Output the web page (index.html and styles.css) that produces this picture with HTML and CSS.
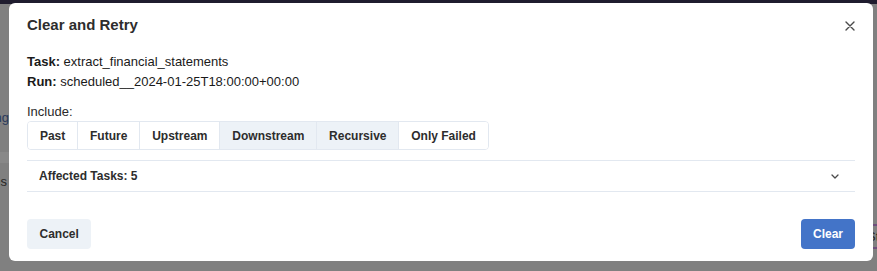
FILE: index.html
```html
<!DOCTYPE html>
<html>
<head>
<meta charset="utf-8">
<link rel="stylesheet" href="styles.css">
</head>
<body>
<div class="page">
  <div class="topbar"></div>
  <div class="bg">
    <div class="bg-left">
      <div class="bg-text bg-ng">Running</div>
      <div class="bg-stripe"></div>
      <div class="bg-text bg-s">Runs</div>
    </div>
    <div class="bg-right">
      <div class="bg-tag">Start</div>
    </div>
  </div>

  <div class="modal">
    <div class="modal-header">
      <h2 class="title">Clear and Retry</h2>
      <button class="close" aria-label="Close">
        <svg width="10" height="10" viewBox="0 0 10 10"><path d="M1 1L9 9M9 1L1 9" stroke="#4a4a4a" stroke-width="1.4" stroke-linecap="round"/></svg>
      </button>
    </div>
    <div class="modal-body">
      <div class="info"><b>Task:</b> extract_financial_statements</div>
      <div class="info"><b>Run:</b> scheduled__2024-01-25T18:00:00+00:00</div>
      <div class="include-label">Include:</div>
      <div class="group">
        <button class="opt">Past</button>
        <button class="opt">Future</button>
        <button class="opt">Upstream</button>
        <button class="opt active">Downstream</button>
        <button class="opt active">Recursive</button>
        <button class="opt">Only Failed</button>
      </div>
      <div class="accordion">
        <span class="acc-title">Affected Tasks: 5</span>
        <svg class="chev" width="8" height="5" viewBox="0 0 8 5"><path d="M1 1L4 4L7 1" fill="none" stroke="#4a4a4a" stroke-width="1.3" stroke-linecap="round" stroke-linejoin="round"/></svg>
      </div>
    </div>
    <div class="modal-footer">
      <button class="btn btn-cancel">Cancel</button>
      <button class="btn btn-clear">Clear</button>
    </div>
  </div>
</div>
</body>
</html>
```

FILE: styles.css
```css
* { box-sizing: border-box; }
html, body { margin: 0; padding: 0; }
body {
  width: 877px;
  height: 271px;
  overflow: hidden;
  font-family: "Liberation Sans", Arial, Helvetica, sans-serif;
  background: #808080;
}
.page {
  position: relative;
  width: 877px;
  height: 271px;
  background: #808080;
}
.topbar {
  height: 4px;
  background: #1f1c2e;
}
.bg {
  display: flex;
  justify-content: space-between;
  height: 267px;
}
.bg-left {
  width: 9px;
  overflow: hidden;
  display: flex;
  flex-direction: column;
  align-items: flex-end;
}
.bg-text {
  font-size: 13px;
  line-height: 16px;
  white-space: nowrap;
}
.bg-ng {
  margin-top: 106px;
  color: #2a3a5c;
}
.bg-stripe {
  width: 9px;
  height: 11px;
  margin-top: 26px;
  background: #888888;
}
.bg-s {
  margin-top: 11px;
  margin-right: 2px;
  color: #262626;
}
.bg-right {
  width: 5px;
  overflow: hidden;
  display: flex;
  flex-direction: column;
}
.bg-tag {
  margin-top: 220px;
  height: 25px;
  border-top: 2px solid #6e4f7c;
  border-bottom: 2px solid #6e4f7c;
  font-size: 13px;
  line-height: 21px;
  color: #262626;
  white-space: nowrap;
  text-indent: -5px;
}

.modal {
  position: absolute;
  left: 9px;
  top: 3px;
  width: 864px;
  height: 258px;
  background: #ffffff;
  border-radius: 6px;
  color: #1a202c;
  display: flex;
  flex-direction: column;
}
.modal-header {
  display: flex;
  justify-content: space-between;
  align-items: flex-start;
  padding: 12px 16px 0 18px;
}
.title {
  margin: 0;
  font-size: 15px;
  line-height: 20px;
  font-weight: 700;
  color: #2d2d2d;
}
.close {
  width: 14px;
  height: 14px;
  padding: 0;
  margin-top: 4px;
  border: 0;
  background: transparent;
  display: flex;
  align-items: center;
  justify-content: center;
}
.modal-body {
  padding: 17px 18px 0 18px;
}
.info {
  font-size: 13px;
  line-height: 20px;
  color: #1a1a1a;
}
.info b { font-weight: 700; }
.include-label {
  margin-top: 11px;
  font-size: 13px;
  line-height: 18px;
  color: #2a2a2a;
}
.group {
  display: inline-flex;
  height: 29px;
  border: 1px solid #e2e8f0;
  border-radius: 4px;
  overflow: hidden;
}
.opt {
  font-family: inherit;
  font-size: 12px;
  font-weight: 700;
  color: #2d2d2d;
  background: #ffffff;
  border: 0;
  border-left: 1px solid #e2e8f0;
  padding: 0 11.9px;
  margin: 0;
  height: 27px;
}
.opt:first-child { border-left: 0; }
.opt.active { background: #edf2f7; }
.accordion {
  margin-top: 10px;
  height: 32px;
  border-top: 1px solid #e2e8f0;
  border-bottom: 1px solid #e2e8f0;
  display: flex;
  align-items: center;
  justify-content: space-between;
  padding: 0 16px 0 12px;
}
.acc-title {
  font-size: 12px;
  font-weight: 700;
  color: #2d2d2d;
}
.chev { display: block; }
.modal-footer {
  display: flex;
  justify-content: space-between;
  padding: 27px 18px 0 18px;
}
.btn {
  font-family: inherit;
  font-size: 12px;
  font-weight: 700;
  height: 30px;
  padding: 0 12px;
  border: 0;
  border-radius: 4px;
}
.btn-cancel {
  background: #edf2f7;
  color: #2d2d2d;
  padding: 0 12.5px;
}
.btn-clear {
  background: #4374c8;
  color: #ffffff;
}
```
